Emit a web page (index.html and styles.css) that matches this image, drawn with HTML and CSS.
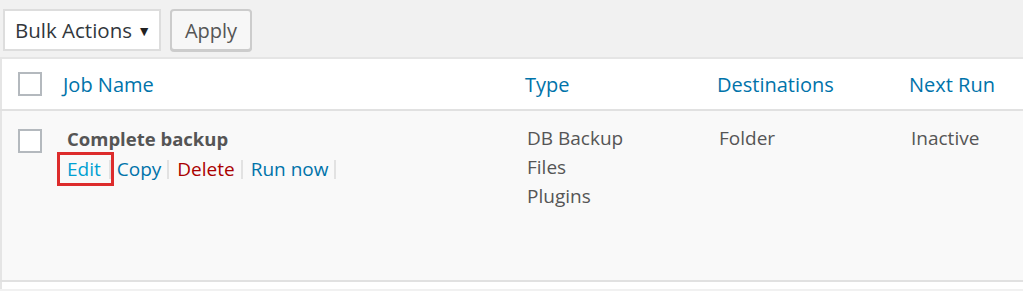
FILE: index.html
```html
<!DOCTYPE html>
<html lang="en">
<head>
  <meta charset="UTF-8">
  <title>Jobs</title>
  <link rel="stylesheet" href="styles.css">
</head>
<body>
  <div class="tablenav">
    <div class="select-wrap">
      <span>Bulk Actions</span>
      <span class="caret">&#9660;</span>
    </div>
    <button class="button">Apply</button>
  </div>

  <table class="jobs">
    <thead>
      <tr>
        <th class="check"><span class="checkbox"></span></th>
        <th class="col-name"><a href="#">Job Name</a></th>
        <th class="col-type"><a href="#">Type</a></th>
        <th class="col-dest"><a href="#">Destinations</a></th>
        <th class="col-next"><a href="#">Next Run</a></th>
      </tr>
    </thead>
    <tbody>
      <tr class="job-row">
        <td class="check"><span class="checkbox"></span></td>
        <td class="col-name">
          <strong>Complete backup</strong>
          <div class="row-actions">
            <span class="edit"><a href="#">Edit</a><span class="sep"></span></span>
            <a href="#" class="copy">Copy</a><span class="sep"></span>
            <a href="#" class="delete">Delete</a><span class="sep"></span>
            <a href="#">Run now</a><span class="sep"></span>
          </div>
        </td>
        <td class="col-type">DB Backup<br>Files<br>Plugins</td>
        <td class="col-dest">Folder</td>
        <td class="col-next">Inactive</td>
      </tr>
      <tr class="empty-row">
        <td colspan="5"></td>
      </tr>
    </tbody>
  </table>
</body>
</html>
```

FILE: styles.css
```css
* {
  margin: 0;
  padding: 0;
  box-sizing: border-box;
}
body {
  font-family: 'Open Sans', sans-serif;
  font-size: 19px;
  background-color: #f1f1f1;
  color: #555;
  overflow: hidden;
}
a {
  color: #0073aa;
  text-decoration: none;
}

/* Barra de ações */
.tablenav {
  display: flex;
  gap: 9px;
  padding: 9px 0 0 3px;
  height: 57px;
}
.select-wrap {
  display: flex;
  align-items: center;
  justify-content: space-between;
  width: 158px;
  height: 42px;
  padding: 0 8px 0 10px;
  font-size: 20.5px;
  background-color: #fff;
  border: 2px solid #ddd;
  color: #32373c;
}
.caret {
  font-size: 14px;
  color: #222;
}
.button {
  width: 82px;
  height: 42px;
  font-family: inherit;
  font-size: 20px;
  color: #555;
  background-color: #f7f7f7;
  border: 2px solid #ccc;
  border-radius: 4px;
  box-shadow: 0 1px 0 #ccc;
}

/* Tabela */
.jobs {
  width: 100%;
  border-collapse: collapse;
  border-left: 2px solid #e5e5e5;
  border-top: 2px solid #e5e5e5;
  background-color: #fff;
  text-align: left;
}
.jobs thead tr {
  height: 52px;
  border-bottom: 2px solid #e1e1e1;
}
.jobs th {
  font-size: 20px;
  font-weight: 400;
  vertical-align: middle;
}
.job-row {
  height: 171px;
  background-color: #f9f9f9;
  border-bottom: 2px solid #e1e1e1;
}
.empty-row {
  height: 8px;
}
.jobs td {
  vertical-align: top;
  padding-top: 13px;
  line-height: 29px;
}
.jobs .empty-row td {
  padding: 0;
}
.check {
  width: 62px;
  padding-left: 16px;
}
.jobs td.check {
  padding-top: 18px;
}
.checkbox {
  display: block;
  width: 24px;
  height: 24px;
  background-color: #fff;
  border: 2px solid #b4b9be;
}
.col-name {
  width: 462px;
}
.jobs td.col-name {
  padding-left: 4px;
}
.jobs td.col-name strong {
  font-size: 18.5px;
}
.col-type {
  width: 192px;
}
.jobs td.col-type,
.jobs td.col-dest,
.jobs td.col-next {
  padding-left: 2px;
}
.col-dest {
  width: 192px;
}

/* Ações da linha */
.row-actions {
  display: flex;
  align-items: center;
  margin-top: -2px;
}
.row-actions .edit {
  display: flex;
  align-items: center;
  margin-left: -10px;
  margin-right: 3px;
  padding-left: 7px;
  line-height: 28px;
  border: 3px solid #dd2c2c;
}
.row-actions .edit a {
  color: #00a0d2;
}
.row-actions .delete {
  color: #a00;
}
.sep {
  display: inline-block;
  width: 2px;
  height: 19px;
  margin: 0 8px 0 6px;
  background-color: #e2e2e2;
}
.edit .sep {
  margin: 0 0 0 8px;
}
```
